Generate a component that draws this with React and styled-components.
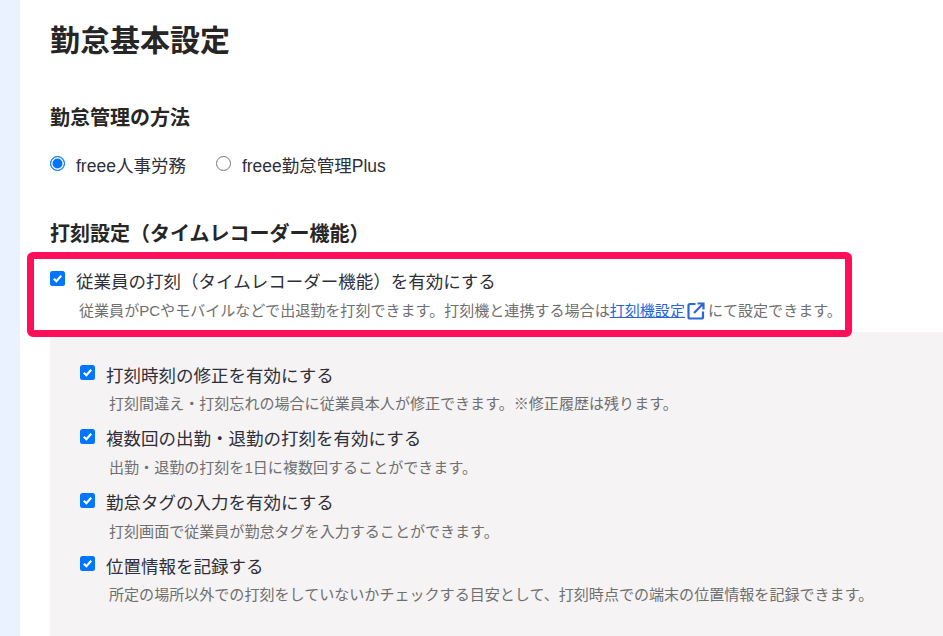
import React from "react";
import styled, { createGlobalStyle } from "styled-components";

const Global = createGlobalStyle`
  html, body { margin: 0; padding: 0; height: 100%; overflow: hidden; background: #fff; }
  body { font-family: "Liberation Sans", "Noto Sans CJK JP", sans-serif; color: #2b2b2b; }
`;
const Page = styled.div`display: flex; width: 943px; height: 636px; overflow: hidden;`;
const Rail = styled.div`width: 20px; flex: none; background: #ebf2ff;`;
const Main = styled.main`flex: 1; min-width: 0; padding: 21px 0 0 30px;`;
const Title = styled.h1`margin: 0; font-size: 30px; line-height: 40px; font-weight: 700; color: #262626;`;
const Heading = styled.h2`margin: ${p => p.$top}px 0 0; font-size: 20px; line-height: 30px; font-weight: 700; color: #262626;`;
const Radios = styled.div`display: flex; gap: 30px; margin-top: 16px; height: 30px; align-items: center;`;
const RadioLabel = styled.label`display: flex; align-items: center; gap: 11px; font-size: 17.5px; color: #2f2f3a;`;
const Radio = styled.input.attrs({ type: "radio", name: "method" })`
  appearance: none; width: 15px; height: 15px; margin: 0 0 2px; border-radius: 50%; background: #fff;
  border: 1px solid #767676; box-sizing: border-box;
  &:checked { border: 1.5px solid #0075ff; box-shadow: inset 0 0 0 1.5px #fff; background: #0075ff; }
`;
const Highlight = styled.section`
  position: relative; z-index: 1; box-sizing: border-box; width: 825px; height: 85px;
  margin: 3px 0 -5px -23px; padding: 8px 0 0 16px; background: #fff;
  border: 7px solid #ff0f5a; border-radius: 6px;
`;
const Panel = styled.section`height: 303px; padding: 29px 0 0 30px; background: #f5f3f4;`;
const Option = styled.div`height: 63.8px;`;
const CheckRow = styled.label`display: flex; align-items: center; gap: 11px; height: 26px;`;
const Box = styled.span`
  flex: none; width: 15px; height: 15px; margin-bottom: 3px; border-radius: 2.5px; background: #0075ff;
  display: flex; align-items: center; justify-content: center;
`;
const LabelText = styled.span`font-size: 17.5px; color: #2f2f3a; white-space: nowrap;`;
const Desc = styled.p`
  margin: ${p => p.$top}px 0 0 29px; font-size: 15.05px; line-height: 24px; color: #6f6f6f; white-space: nowrap;
  display: flex; align-items: center;
`;
const Link = styled.a`color: #2864d8; text-decoration: underline; margin-right: 2px;`;
const LinkIcon = styled.svg`width: 18px; height: 18px; margin-right: 3px; flex: none;`;

const Check = ({ children }) => (
  <CheckRow>
    <Box>
      <svg width="11" height="11" viewBox="0 0 11 11" fill="none">
        <path d="M1.8 5.7 L4.4 8.2 L9.2 2.8" stroke="#fff" strokeWidth="2.1" />
      </svg>
    </Box>
    <LabelText>{children}</LabelText>
  </CheckRow>
);

const options = [
  ["打刻時刻の修正を有効にする", "打刻間違え・打刻忘れの場合に従業員本人が修正できます。※修正履歴は残ります。"],
  ["複数回の出勤・退勤の打刻を有効にする", "出勤・退勤の打刻を1日に複数回することができます。"],
  ["勤怠タグの入力を有効にする", "打刻画面で従業員が勤怠タグを入力することができます。"],
  ["位置情報を記録する", "所定の場所以外での打刻をしていないかチェックする目安として、打刻時点での端末の位置情報を記録できます。"],
];

export default function App() {
  return (
    <Page>
      <Global />
      <Rail />
      <Main>
        <Title>勤怠基本設定</Title>
        <Heading $top={42}>勤怠管理の方法</Heading>
        <Radios>
          <RadioLabel><Radio defaultChecked />freee人事労務</RadioLabel>
          <RadioLabel><Radio />freee勤怠管理Plus</RadioLabel>
        </Radios>
        <Heading $top={40}>打刻設定（タイムレコーダー機能）</Heading>
        <Highlight>
          <Check>従業員の打刻（タイムレコーダー機能）を有効にする</Check>
          <Desc $top={6}>
            従業員がPCやモバイルなどで出退勤を打刻できます。打刻機と連携する場合は
            <Link href="#">打刻機設定</Link>
            <LinkIcon viewBox="0 0 18 18" fill="none" stroke="#2f66d6" strokeWidth="2.2">
              <path d="M8.5 2H3A1.5 1.5 0 0 0 1.5 3.5V15A1.5 1.5 0 0 0 3 16.5H14.5A1.5 1.5 0 0 0 16 15V9.5" />
              <path d="M10.5 1.5H16.5V7.5M16.2 1.8L7 11" />
            </LinkIcon>
            にて設定できます。
          </Desc>
        </Highlight>
        <Panel>
          {options.map(([label, desc]) => (
            <Option key={label}>
              <Check>{label}</Check>
              <Desc $top={5}>{desc}</Desc>
            </Option>
          ))}
        </Panel>
      </Main>
    </Page>
  );
}
